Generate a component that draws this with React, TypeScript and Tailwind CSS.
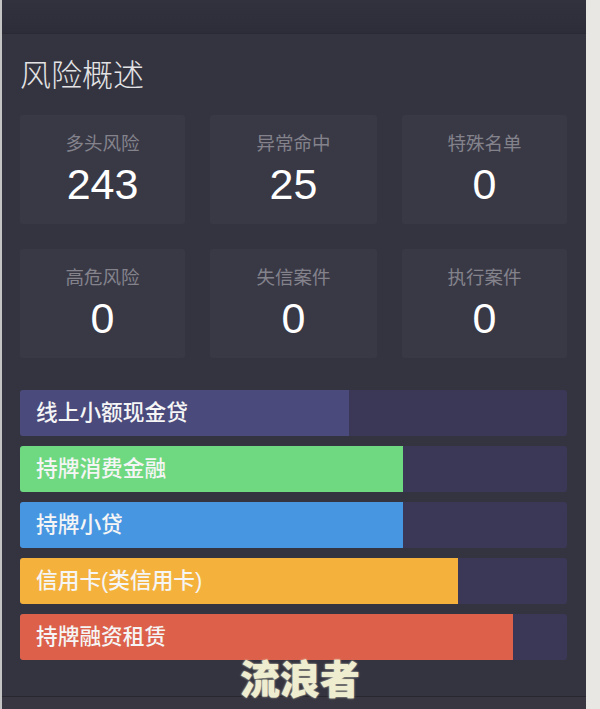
const cjk = "font-['Liberation_Sans','Noto_Sans_CJK_SC',sans-serif]";

const stats = [
  { label: "多头风险", value: 243 },
  { label: "异常命中", value: 25 },
  { label: "特殊名单", value: 0 },
  { label: "高危风险", value: 0 },
  { label: "失信案件", value: 0 },
  { label: "执行案件", value: 0 },
];

const bars = [
  { label: "线上小额现金贷", width: 329, color: "bg-[#4a4a7d]" },
  { label: "持牌消费金融", width: 383, color: "bg-[#6fd981]" },
  { label: "持牌小贷", width: 383, color: "bg-[#4796e2]" },
  { label: "信用卡(类信用卡)", width: 438, color: "bg-[#f4b23d]" },
  { label: "持牌融资租赁", width: 493, color: "bg-[#dc604a]" },
];

function StatCard({ label, value }: { label: string; value: number }) {
  return (
    <div className="h-[109px] rounded-[3px] bg-[#393946] pt-[16px] text-center">
      <p className="text-[18.5px] leading-[26px] text-[#84838c]">{label}</p>
      <p className="mt-[4px] text-[43px] leading-[46px] text-white">{value}</p>
    </div>
  );
}

function Bar({ label, width, color }: { label: string; width: number; color: string }) {
  return (
    <div className="h-[46px] overflow-hidden rounded-[3px] bg-[#3a3856]">
      <div
        className={`flex h-full items-center pl-[16px] text-[21.7px] font-medium whitespace-nowrap text-[#f5f5f5] ${color}`}
        style={{ width }}
      >
        {label}
      </div>
    </div>
  );
}

export default function App() {
  return (
    <div className={`relative h-[709px] w-[600px] overflow-hidden bg-[#e9e7e3] ${cjk}`}>
      <div className="flex h-full w-[586px] flex-col border-l-2 border-[#c4c4c4] bg-[#343440]">
        <div className="h-[34px] shrink-0 border-b border-[#2a2934] bg-gradient-to-b from-[#32313e] to-[#2d2c39]" />
        <div className="flex-1 pt-[22px] pr-[19px] pl-[18px]">
          <h1 className="text-[31px] leading-[40px] font-light text-[#e4e4e6]">风险概述</h1>
          <div className="mt-[19px] grid grid-cols-[165px_167px_165px] gap-x-[25px] gap-y-[25px]">
            {stats.map((stat) => (
              <StatCard key={stat.label} label={stat.label} value={stat.value} />
            ))}
          </div>
          <div className="mt-[32px] flex flex-col gap-[10px]">
            {bars.map((bar) => (
              <Bar key={bar.label} label={bar.label} width={bar.width} color={bar.color} />
            ))}
          </div>
        </div>
        <div className="h-[13px] shrink-0 border-t border-[#28272f] bg-[#373641]" />
      </div>
      <div className="absolute top-[657px] left-[240px] text-[40px] leading-[46px] font-black whitespace-nowrap text-[#efedd0] [text-shadow:0_0_2px_#efedd0]">
        流浪者
      </div>
    </div>
  );
}
